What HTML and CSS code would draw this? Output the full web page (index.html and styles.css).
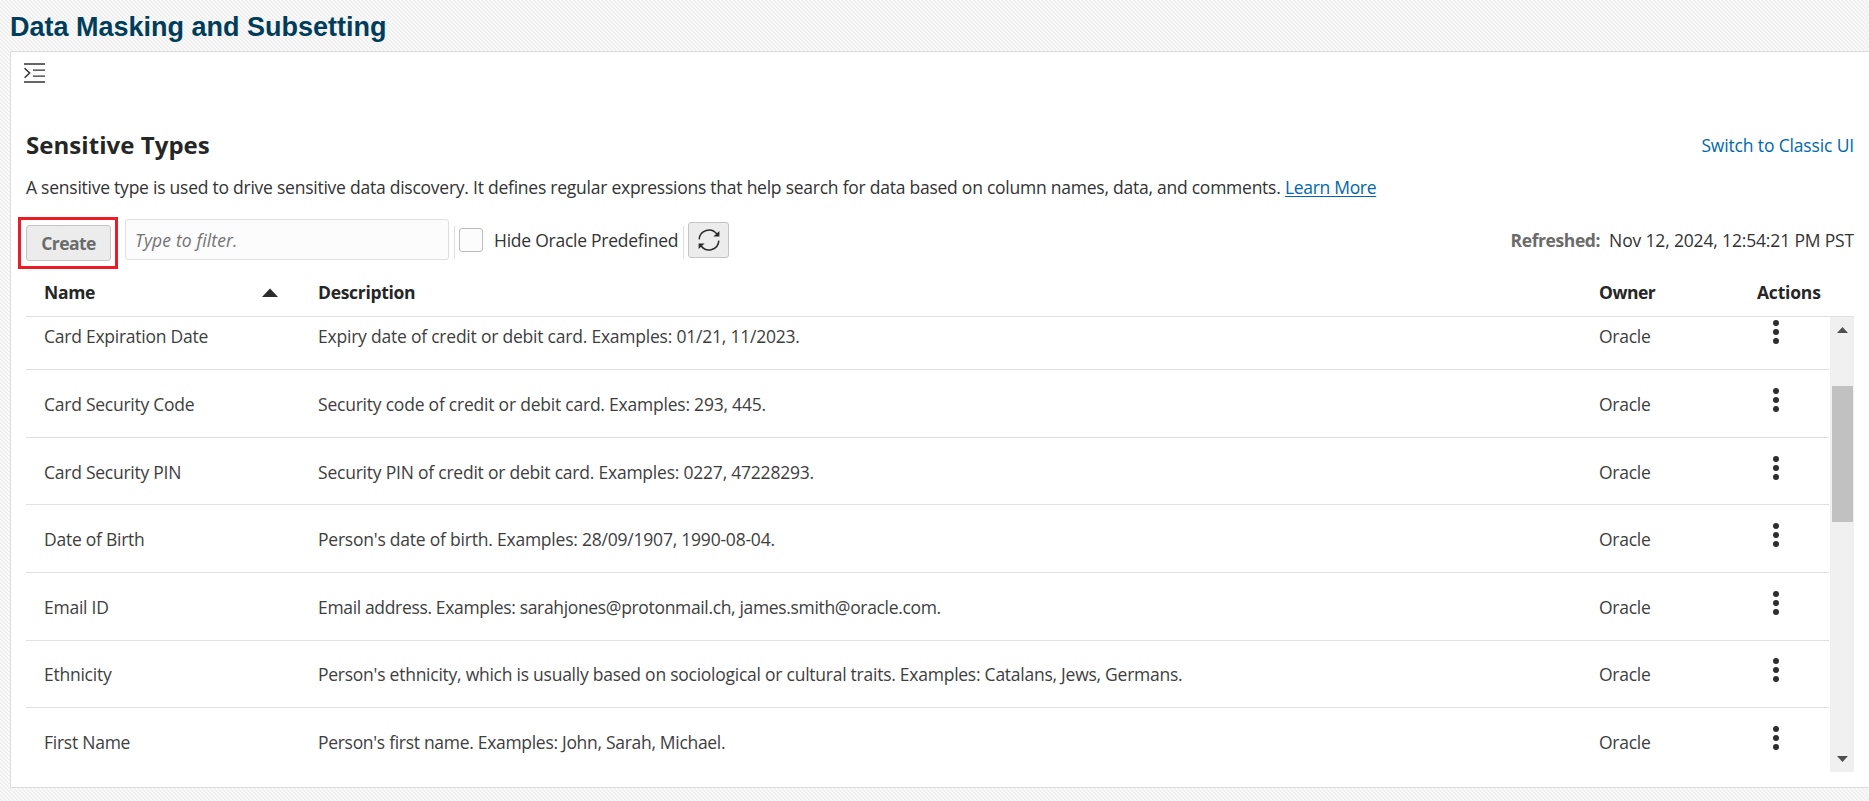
FILE: index.html
```html
<!DOCTYPE html>
<html lang="en">
<head>
<meta charset="utf-8">
<title>Data Masking and Subsetting</title>
<link rel="stylesheet" href="styles.css">
</head>
<body>
<h1 class="page-title">Data Masking and Subsetting</h1>
<main class="panel">
  <div class="nav-toggle">
    <svg width="22" height="20" viewBox="0 0 22 20" fill="none" stroke="#333" stroke-width="1.4">
      <path d="M0 1H21M9 7.1H21M9 13.1H21M0 19H21"/><path d="M0.6 5.2L5.6 10L0.6 14.8" stroke-width="1.5"/>
    </svg>
  </div>
  <div class="heading">
    <h2 class="section-title">Sensitive Types</h2>
    <a class="switch">Switch to Classic UI</a>
  </div>
  <p class="intro"><span class="intro-text">A sensitive type is used to drive sensitive data discovery. It defines regular expressions that help search for data based on column names, data, and comments.</span> <a class="learn">Learn More</a></p>
  <div class="toolbar">
    <div class="highlight"><button class="create">Create</button></div>
    <div class="filter">Type to filter.</div>
    <span class="divider"></span>
    <span class="checkbox"></span>
    <span class="check-label">Hide Oracle Predefined</span>
    <span class="divider"></span>
    <button class="refresh">
      <svg width="22" height="22" viewBox="0 0 22 22">
        <g fill="none" stroke="#2b2b2b" stroke-width="1.5"><path d="M1.2 10.4A9.8 9.8 0 0 1 18.8 5"/><path d="M20.8 11.6A9.8 9.8 0 0 1 3.2 17"/></g>
        <path d="M21.4 2V7.6H15.4ZM0.6 20V14.4H6.6Z" fill="#2b2b2b"/>
      </svg>
    </button>
    <div class="refreshed"><b class="refreshed-key">Refreshed:</b><span class="refreshed-time">Nov 12, 2024, 12:54:21 PM PST</span></div>
  </div>
  <div class="table">
    <div class="cols thead">
      <span class="name-head">Name<svg class="sort" width="16" height="10" viewBox="0 0 16 10"><path d="M0 9L8 0.4L16 9Z" fill="#2b2b2b"/></svg></span>
      <span>Description</span><span class="owner-head">Owner</span><span class="actions-head">Actions</span>
    </div>
    <div class="viewport">
      <div class="rows">
        <div class="cols row"><span>Card Expiration Date</span><span class="track-loose">Expiry date of credit or debit card. Examples: 01/21, 11/2023.</span><span class="owner">Oracle</span><span class="dots"><i></i><i></i><i></i></span></div>
        <div class="cols row"><span>Card Security Code</span><span class="track-loose">Security code of credit or debit card. Examples: 293, 445.</span><span class="owner">Oracle</span><span class="dots"><i></i><i></i><i></i></span></div>
        <div class="cols row"><span>Card Security PIN</span><span class="track-loose">Security PIN of credit or debit card. Examples: 0227, 47228293.</span><span class="owner">Oracle</span><span class="dots"><i></i><i></i><i></i></span></div>
        <div class="cols row"><span>Date of Birth</span><span class="track-loose">Person's date of birth. Examples: 28/09/1907, 1990-08-04.</span><span class="owner">Oracle</span><span class="dots"><i></i><i></i><i></i></span></div>
        <div class="cols row"><span>Email ID</span><span class="track-tight">Email address. Examples: sarahjones@protonmail.ch, james.smith@oracle.com.</span><span class="owner">Oracle</span><span class="dots"><i></i><i></i><i></i></span></div>
        <div class="cols row"><span>Ethnicity</span><span>Person's ethnicity, which is usually based on sociological or cultural traits. Examples: Catalans, Jews, Germans.</span><span class="owner">Oracle</span><span class="dots"><i></i><i></i><i></i></span></div>
        <div class="cols row"><span>First Name</span><span class="track-snug">Person's first name. Examples: John, Sarah, Michael.</span><span class="owner">Oracle</span><span class="dots"><i></i><i></i><i></i></span></div>
      </div>
      <div class="scrollbar">
        <svg width="11" height="6" viewBox="0 0 11 6"><path d="M0 6L5.5 0L11 6Z" fill="#505050"/></svg>
        <div class="thumb"></div>
        <svg class="arrow-down" width="11" height="6" viewBox="0 0 11 6"><path d="M0 0L5.5 6L11 0Z" fill="#505050"/></svg>
      </div>
    </div>
  </div>
</main>
</body>
</html>
```
FILE: styles.css
```css
* { box-sizing: border-box; }
body {
  margin: 0;
  height: 801px;
  overflow: hidden;
  font: 17.5px/26px "Open Sans", "Noto Sans", sans-serif;
  letter-spacing: -0.25px;
  color: #333;
  background: #f6f6f6 linear-gradient(45deg, #f0f0f0 25%, #f9f9f9 25% 50%, #f0f0f0 50% 75%, #f9f9f9 75%) 0 0 / 4px 4px;
}
.page-title {
  margin: 0;
  height: 51px;
  padding: 3px 0 0 10px;
  font: bold 27px/49px "Liberation Sans", Arial, sans-serif;
  letter-spacing: 0;
  color: #003d5b;
}
.panel {
  height: 737px;
  margin-left: 10px;
  padding: 11px 15px 0 15px;
  background: #fff;
  border: 1px solid #dcdcdc;
  border-right: 0;
  border-radius: 2px 0 0 0;
}
.nav-toggle { height: 65px; margin-left: -2px; }
.nav-toggle svg { display: block; }
.heading { display: flex; justify-content: space-between; height: 33px; }
.section-title { margin: 0; font-size: 24px; line-height: 33px; letter-spacing: 0.05px; color: #262626; }
.switch { line-height: 34px; letter-spacing: -0.15px; color: #0067ad; }
.intro { margin: 13px 0 17px; white-space: nowrap; letter-spacing: -0.244px; }
.learn { color: #0067ad; letter-spacing: -0.3px; text-decoration: underline; text-underline-offset: 2px; text-decoration-thickness: 1px; text-decoration-skip-ink: none; }
.toolbar { display: flex; align-items: center; height: 52px; margin-left: -8px; }
.highlight { width: 100px; height: 52px; padding: 5px; border: 3px solid #ed1c24; }
.create, .refresh { border: 1px solid #c4c4c4; border-radius: 3px; background: #ececec; padding: 0; }
.create { display: block; width: 85px; height: 36px; font: bold 17.5px/34px "Open Sans", sans-serif; letter-spacing: -0.55px; color: #6b6b6b; }
.filter {
  width: 324px;
  height: 41px;
  margin: 0 5px 7px 7px;
  padding-left: 9px;
  border: 1px solid #dfdfdf;
  border-radius: 3px;
  background: #fcfcfc;
  font-style: italic;
  line-height: 41px;
  letter-spacing: 0.15px;
  color: #737373;
}
.divider { width: 1px; height: 33px; margin-bottom: 1px; background: #dfdfdf; }
.checkbox { width: 24px; height: 24px; margin: 0 11px 6px 4px; border: 1px solid #bcbcbc; border-radius: 3px; background: #fcfcfc; }
.check-label { width: 189px; margin-bottom: 7px; letter-spacing: -0.25px; }
.refresh { width: 41px; height: 36px; margin: 0 0 6px 4px; }
.refresh svg { display: block; margin: auto; }
.refreshed { margin: 0 0 7px auto; display: flex; gap: 9px; }
.refreshed-key { color: #6b6b6b; letter-spacing: -0.4px; }
.refreshed-time { letter-spacing: -0.16px; }
.cols { display: grid; grid-template-columns: 274px 1281px 158px 1fr; padding-left: 18px; white-space: nowrap; }
.thead { height: 48px; padding-top: 10px; border-bottom: 1px solid #dfdfdf; font-weight: bold; letter-spacing: -0.3px; color: #262626; }
.name-head { display: flex; align-items: flex-start; justify-content: space-between; }
.sort { margin: 9px 40px 0 0; }
.owner-head { letter-spacing: -0.5px; }
.actions-head { letter-spacing: -0.2px; }
.viewport { display: flex; height: 455px; overflow: hidden; }
.rows { width: 1803px; margin-top: -14.4px; }
.row { height: 67.6px; padding-top: 20.8px; border-bottom: 1px solid #dfdfdf; color: #3e3e3e; }
.row:last-child { border-bottom: 0; }
.owner { letter-spacing: -0.25px; }
.track-loose { letter-spacing: -0.22px; }
.track-snug { letter-spacing: -0.3px; }
.track-tight { letter-spacing: -0.34px; }
.dots { display: flex; flex-direction: column; gap: 3px; margin-top: -3px; padding-left: 15.5px; }
.dots i { width: 6px; height: 6px; border-radius: 50%; background: #2e2e2e; }
.scrollbar { display: flex; flex-direction: column; align-items: center; width: 24px; height: 455px; margin-left: 1px; padding: 10px 0; background: #f0f0f0; }
.scrollbar svg { flex: none; margin-left: 1px; }
.thumb { width: 21px; height: 136px; margin-top: 53px; background: #c1c1c1; }
.arrow-down { margin-top: auto; }
```
